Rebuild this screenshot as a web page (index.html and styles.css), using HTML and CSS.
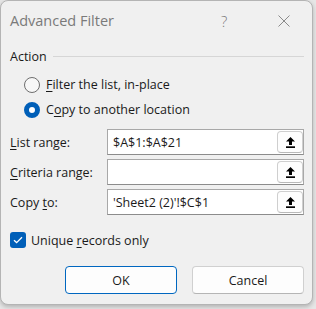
FILE: index.html
```html
<!DOCTYPE html>
<html lang="en">
<head>
    <meta charset="UTF-8">
    <title>Advanced Filter</title>
    <link rel="stylesheet" href="styles.css">
</head>
<body>
    <div class="dialog">
        <!-- Title bar -->
        <div class="titlebar">
            <span class="title">Advanced Filter</span>
            <span class="help">?</span>
            <span class="close">
                <svg width="12" height="12" viewBox="0 0 12 12">
                    <path d="M0.5 0.5 L11.5 11.5 M11.5 0.5 L0.5 11.5" stroke="#8a8a8a" stroke-width="1" fill="none"/>
                </svg>
            </span>
        </div>

        <div class="content">
            <div class="group-head">
                <span>Action</span>
                <span class="rule"></span>
            </div>

            <div class="radio-list">
                <label class="radio">
                    <span class="radio-mark"></span>
                    <span><u>F</u>ilter the list, in-place</span>
                </label>
                <label class="radio checked">
                    <span class="radio-mark"></span>
                    <span>C<u>o</u>py to another location</span>
                </label>
            </div>

            <div class="fields">
                <span class="field-label"><u>L</u>ist range:</span>
                <div class="field-box">
                    <span class="field-value">$A$1:$A$21</span>
                    <span class="pick-btn">
                        <svg width="9" height="11" viewBox="0 0 9 11">
                            <path d="M4.5 0 L9 4.5 H6 V8 H3 V4.5 H0 Z" fill="#000"/>
                            <rect x="0" y="9.3" width="9" height="1.7" fill="#000"/>
                        </svg>
                    </span>
                </div>

                <span class="field-label"><u>C</u>riteria range:</span>
                <div class="field-box">
                    <span class="field-value"></span>
                    <span class="pick-btn">
                        <svg width="9" height="11" viewBox="0 0 9 11">
                            <path d="M4.5 0 L9 4.5 H6 V8 H3 V4.5 H0 Z" fill="#000"/>
                            <rect x="0" y="9.3" width="9" height="1.7" fill="#000"/>
                        </svg>
                    </span>
                </div>

                <span class="field-label">Copy <u>t</u>o:</span>
                <div class="field-box">
                    <span class="field-value">'Sheet2 (2)'!$C$1</span>
                    <span class="pick-btn">
                        <svg width="9" height="11" viewBox="0 0 9 11">
                            <path d="M4.5 0 L9 4.5 H6 V8 H3 V4.5 H0 Z" fill="#000"/>
                            <rect x="0" y="9.3" width="9" height="1.7" fill="#000"/>
                        </svg>
                    </span>
                </div>
            </div>

            <label class="check">
                <span class="check-mark">
                    <svg width="10" height="8" viewBox="0 0 10 8">
                        <path d="M1 4.2 L3.6 6.6 L9 1.2" stroke="#fff" stroke-width="1.3" fill="none"/>
                    </svg>
                </span>
                <span>Unique <u>r</u>ecords only</span>
            </label>

            <div class="buttons">
                <button class="btn primary">OK</button>
                <button class="btn">Cancel</button>
            </div>
        </div>
    </div>
</body>
</html>
```

FILE: styles.css
```css
:root {
    --dialog-bg: #f0f0f0;
    --accent: #005fb8;
    --text: #1a1a1a;
    --muted: #7a7a7a;
}

* {
    margin: 0;
    padding: 0;
    box-sizing: border-box;
    font-family: 'Open Sans', 'Noto Sans', sans-serif;
}

body {
    background-color: #e6e6e6;
    width: 316px;
    height: 309px;
    overflow: hidden;
}

.dialog {
    width: 313px;
    height: 305px;
    background-color: var(--dialog-bg);
    border: 1px solid #b4b4b4;
    border-radius: 8px;
    box-shadow: 0 2px 4px rgba(0, 0, 0, 0.22);
    color: var(--text);
    font-size: 12.5px;
    display: flex;
    flex-direction: column;
}

u {
    text-underline-offset: 2px;
}

/* Title bar */
.titlebar {
    height: 39px;
    display: flex;
    align-items: center;
    padding-left: 9px;
}

.title {
    font-size: 14.5px;
    color: var(--muted);
    flex: 1;
}

.help {
    font-size: 15px;
    font-weight: 300;
    color: var(--muted);
    width: 12px;
    margin-right: 45px;
}

.close {
    display: flex;
    margin-right: 22px;
}

/* Body */
.content {
    padding: 0 8px 0 9px;
    display: flex;
    flex-direction: column;
}

.group-head {
    height: 20px;
    margin-top: 6px;
    display: flex;
    align-items: center;
    gap: 6px;
}

.rule {
    flex: 1;
    height: 1px;
    background-color: #d6d6d6;
}

.radio-list {
    margin-top: 6px;
    padding-left: 14px;
    display: flex;
    flex-direction: column;
}

.radio {
    height: 25px;
    display: flex;
    align-items: center;
    gap: 6px;
}

.radio-mark {
    width: 16px;
    height: 16px;
    border-radius: 50%;
    border: 1px solid #6e6e6e;
    background-color: #f7f7f7;
}

.radio.checked .radio-mark {
    border: 5px solid var(--accent);
    background-color: #fff;
}

.fields {
    margin-top: 7px;
    display: grid;
    grid-template-columns: 97px 1fr;
    row-gap: 4px;
    align-items: center;
}

.field-box {
    height: 26px;
    background-color: #fff;
    border: 1px solid #a8a8a8;
    border-bottom-color: #8c8c8c;
    display: flex;
    align-items: center;
    padding: 1px 0 1px 5px;
}

.field-value {
    flex: 1;
}

.pick-btn {
    width: 26px;
    height: 22px;
    border: 1px solid #cfcfcf;
    border-bottom-color: #b9b9b9;
    border-radius: 4px;
    background-color: #fdfdfd;
    display: flex;
    align-items: center;
    justify-content: center;
}

.check {
    height: 20px;
    margin-top: 15px;
    display: flex;
    align-items: center;
    gap: 5px;
}

.check-mark {
    width: 16px;
    height: 16px;
    border-radius: 3px;
    background-color: var(--accent);
    display: flex;
    align-items: center;
    justify-content: center;
}

.buttons {
    margin-top: 16px;
    display: flex;
    justify-content: flex-end;
    gap: 15px;
}

.btn {
    width: 112px;
    height: 28px;
    background-color: #fdfdfd;
    border: 1px solid #d0d0d0;
    border-bottom-color: #b5b5b5;
    border-radius: 4px;
    font-size: 12.5px;
    color: var(--text);
}

.btn.primary {
    border: 1px solid #0067c0;
}
```
